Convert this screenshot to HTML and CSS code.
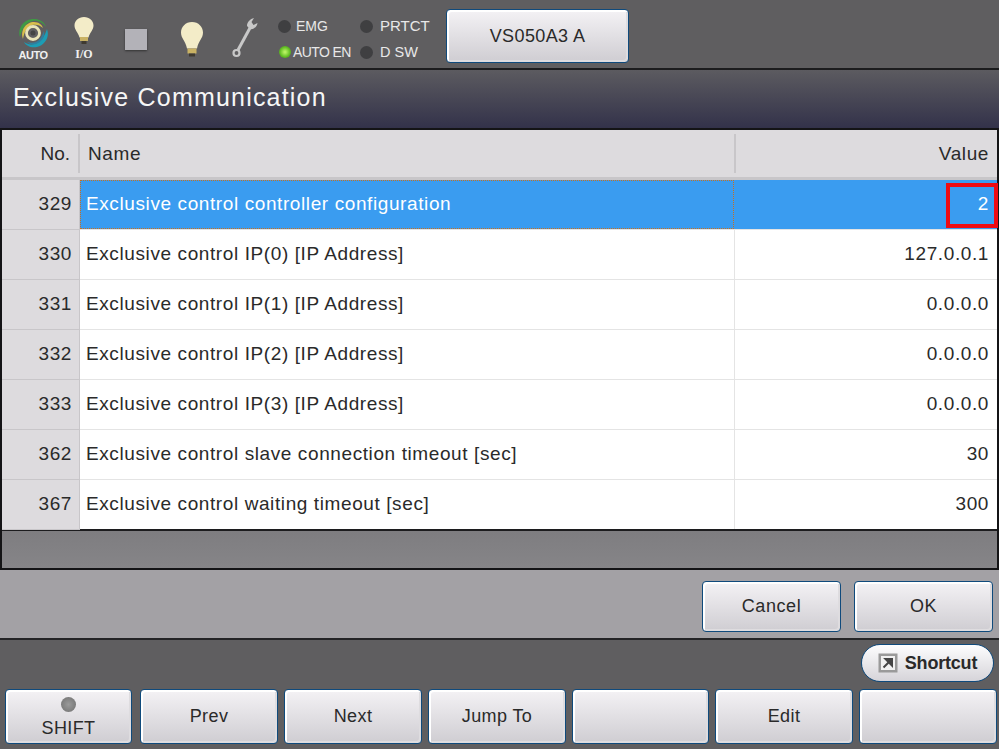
FILE: index.html
```html
<!DOCTYPE html>
<html lang="en">
<head>
<meta charset="utf-8">
<title>Exclusive Communication</title>
<link rel="stylesheet" href="styles.css">
</head>
<body>
<div class="screen">
  <header class="topbar">
    <div class="tool tool-auto">
      <svg viewBox="0 0 32 31" width="32" height="31">
        <path d="M3 20C0 10 8 1 18 2c6 .6 10 4 11 8-3-4-8-7-13-6C9 5 5 12 3 20z" fill="#3f9a44"/>
        <path d="M6 22C3 13 9 5 17 5c5 0 8 3 9 6-3-3-7-4-11-3-5 2-8 7-9 14z" fill="#d8bf4c"/>
        <path d="M30 12c3 8-2 16-10 18-6 1-11-1-13-5 4 3 9 3 13 1 5-2 8-8 10-14z" fill="#1c9db4"/>
        <path d="M27 14c1 6-2 11-8 13-4 1-7 0-9-2 3 1 6 1 9 0 4-2 6-6 8-11z" fill="#2f7fa0"/>
        <circle cx="16" cy="16" r="6.500" fill="none" stroke="#e9e4b8" stroke-width="2.800"/>
        <circle cx="16" cy="16" r="2.500" fill="#444"/>
      </svg>
      <span class="tool-label">AUTO</span>
    </div>
    <div class="tool tool-io">
      <svg viewBox="0 0 20 30" width="20" height="30">
        <path d="M10 1C4.500 1 .5 5 .5 9.500c0 4.500 3.500 6.500 5 12h9c1.500-5.500 5-7.500 5-12C19.500 5 15.500 1 10 1z" fill="#f3ecc8"/>
        <rect x="6" y="21" width="8" height="4" fill="#c9b264"/>
        <rect x="7.500" y="25" width="5" height="3" fill="#3f3a30"/>
      </svg>
      <span class="tool-label tool-label-serif">I/O</span>
    </div>
    <div class="square"></div>
    <svg class="bulb" viewBox="0 0 24 38" width="24" height="38">
      <path d="M12 1C5.500 1 1 6 1 11.500c0 6 4.500 8 6 16h10c1.500-8 6-10 6-16C23 6 18.500 1 12 1z" fill="#f3ecc8"/>
      <rect x="7.500" y="27.500" width="9" height="5" fill="#c9b264"/>
      <rect x="9" y="32.500" width="6" height="3" fill="#3f3a30"/>
    </svg>
    <svg class="wrench" viewBox="0 0 26 42" width="26" height="42">
      <path d="M6 33 18.500 10" stroke="#c8c8c8" stroke-width="3" fill="none"/>
      <path d="M15 9C15 5 18 2 22 1l-2.500 4 2 3 4-2c-.5 4-4.500 7-7.500 6z" fill="#c8c8c8"/>
      <circle cx="4.500" cy="36" r="3" fill="none" stroke="#c8c8c8" stroke-width="2.200"/>
    </svg>
    <div class="lamps">
      <div class="lamp"><i class="dot"></i>EMG</div>
      <div class="lamp lamp-wide"><i class="dot"></i>PRTCT</div>
      <div class="lamp lamp-tight"><i class="dot dot-on"></i>AUTO EN</div>
      <div class="lamp lamp-wide lamp-short"><i class="dot"></i>D SW</div>
    </div>
    <button class="btn btn-robot">VS050A3 A</button>
  </header>

  <h1 class="title">Exclusive Communication</h1>

  <section class="panel">
    <div class="row row-head">
      <div class="cell cell-no">No.</div>
      <div class="cell cell-name">Name</div>
      <div class="cell cell-value">Value</div>
    </div>
    <div class="row row-selected">
      <div class="cell cell-no">329</div>
      <div class="cell cell-name">Exclusive control controller configuration</div>
      <div class="cell cell-value">2<span class="cursor"></span></div>
    </div>
    <div class="row">
      <div class="cell cell-no">330</div>
      <div class="cell cell-name">Exclusive control IP(0) [IP Address]</div>
      <div class="cell cell-value">127.0.0.1</div>
    </div>
    <div class="row">
      <div class="cell cell-no">331</div>
      <div class="cell cell-name">Exclusive control IP(1) [IP Address]</div>
      <div class="cell cell-value">0.0.0.0</div>
    </div>
    <div class="row">
      <div class="cell cell-no">332</div>
      <div class="cell cell-name">Exclusive control IP(2) [IP Address]</div>
      <div class="cell cell-value">0.0.0.0</div>
    </div>
    <div class="row">
      <div class="cell cell-no">333</div>
      <div class="cell cell-name">Exclusive control IP(3) [IP Address]</div>
      <div class="cell cell-value">0.0.0.0</div>
    </div>
    <div class="row">
      <div class="cell cell-no">362</div>
      <div class="cell cell-name">Exclusive control slave connection timeout [sec]</div>
      <div class="cell cell-value">30</div>
    </div>
    <div class="row">
      <div class="cell cell-no">367</div>
      <div class="cell cell-name">Exclusive control waiting timeout [sec]</div>
      <div class="cell cell-value">300</div>
    </div>
    <div class="panel-rest"></div>
  </section>

  <div class="actions">
    <button class="btn btn-action">Cancel</button>
    <button class="btn btn-action">OK</button>
  </div>

  <footer class="footer">
    <div class="shortcut-row">
      <button class="shortcut">
        <svg viewBox="0 0 20 20" width="20" height="20">
          <rect x="0.500" y="0.500" width="19" height="19" fill="#9a9a9a"/>
          <rect x="3" y="3" width="14" height="14" fill="#f0f0f0"/>
          <path d="M5.500 14.500l5-5M7.500 6h6.500v6.500z" stroke="#444" stroke-width="2" fill="#444"/>
        </svg>
        Shortcut
      </button>
    </div>
    <div class="fkeys">
      <button class="btn fkey fkey-shift"><i class="shift-led"></i>SHIFT</button>
      <button class="btn fkey">Prev</button>
      <button class="btn fkey">Next</button>
      <button class="btn fkey">Jump To</button>
      <button class="btn fkey fkey-narrow"></button>
      <button class="btn fkey">Edit</button>
      <button class="btn fkey"></button>
    </div>
  </footer>
</div>
</body>
</html>
```
FILE: styles.css
```css
* { box-sizing: border-box; }
html, body { margin: 0; padding: 0; }
body { width: 999px; height: 749px; overflow: hidden; background: #5f5e60; font-family: "Liberation Sans", Arial, sans-serif; }
.screen { display: flex; flex-direction: column; width: 999px; height: 749px; }

.topbar { height: 70px; flex: none; display: flex; align-items: flex-start; background: #5f5e60; border-bottom: 2px solid #1c1c1e; }
.tool { display: flex; flex-direction: column; align-items: center; }
.tool-label { color: #f0f0f0; font-size: 11px; font-weight: 700; letter-spacing: -0.5px; line-height: 11px; white-space: nowrap; }
.tool-label-serif { font-family: "Liberation Serif", serif; font-size: 12px; letter-spacing: 0; }
.tool-auto { width: 32px; margin: 17px 0 0 17px; }
.tool-auto .tool-label { margin-top: 2px; }
.tool-io { width: 20px; margin: 16px 0 0 25px; }
.tool-io .tool-label { margin-top: 3px; }
.square { width: 22px; height: 21px; margin: 29px 0 0 31px; background: #b3b2b8; box-shadow: 0 1px 2px #333; }
.bulb { margin: 21px 0 0 33px; flex: none; }
.wrench { margin: 17px 0 0 28px; flex: none; }
.lamps { display: grid; grid-template-columns: 82px 70px; row-gap: 8px; margin: 17px 0 0 20px; }
.lamp { display: flex; align-items: center; gap: 5px; color: #e8e8e8; font-size: 14px; line-height: 18px; white-space: nowrap; }
.lamp-wide { gap: 7px; font-size: 15px; }
.lamp-short { font-size: 14.5px; }
.lamp-tight { gap: 2px; letter-spacing: -0.6px; }
.dot { width: 13px; height: 13px; border-radius: 50%; background: #3f3f41; flex: none; }
.dot-on { background: radial-gradient(circle, #b4f060 10%, #5fbb22 60%, #4a8a24 100%); margin-left: 1px; width: 12px; height: 12px; }

.btn { border: 1px solid #0f4a7c; border-radius: 4px; background: linear-gradient(#f4f2f5, #cfcdd2); box-shadow: inset 2px 2px 0 #fff, inset -2px -2px 0 #dedcdf; color: #2a2a2a; font-family: inherit; font-size: 18px; letter-spacing: 0.4px; padding: 0; }
.btn-robot { width: 183px; height: 54px; margin: 9px 0 0 16px; }

.title { height: 58px; flex: none; margin: 0; padding: 0 0 3px 13px; display: flex; align-items: center; background: linear-gradient(#5c5b60, #33324a); color: #f6f6f6; font-size: 25px; font-weight: 400; letter-spacing: 1.2px; }

.panel { height: 442px; flex: none; display: flex; flex-direction: column; border: 2px solid #141416; background: #807f82; }
.row { height: 50px; display: flex; flex: none; background: #fff; border-bottom: 1px solid #e4e4e4; color: #2a2a2a; font-size: 19px; letter-spacing: 0.6px; }
.cell { display: flex; align-items: center; position: relative; padding-bottom: 2px; }
.cell-no { width: 78px; justify-content: flex-end; padding-right: 7px; background: #dddbde; border-bottom: 1px solid #c8c6c9; border-right: 1px solid #c8c6c9; margin-bottom: -1px; }
.cell-name { width: 655px; padding-left: 6px; white-space: nowrap; border-right: 1px solid #e4e4e4; }
.cell-value { flex: 1; justify-content: flex-end; padding-right: 8px; }

.row-head { background: #dddbde; border-bottom: 3px solid #c8c6c9; }
.row-head .cell { padding-bottom: 0; }
.row-head .cell-no { border: 0; margin-bottom: 0; padding-right: 10px; letter-spacing: 0; }
.row-head .cell-name { padding-left: 8px; border-right: 0; width: 656px; }
.row-head .cell-no::after, .row-head .cell-name::after { content: ""; position: absolute; right: 0; top: 4px; bottom: 4px; width: 2px; background: #c8c6c9; }

.row-selected { background: #3a9cf0; color: #fff; }
.row-selected .cell-no { color: #2a2a2a; }
.row-selected .cell-name { border: 1px dotted #c8701e; padding-left: 5px; margin-right: 1px; width: 654px; }
.cursor { position: absolute; right: -1px; top: 3px; width: 52px; height: 45px; border: 4px solid #ee0b12; }
.panel-rest { flex: 1; margin-top: -1px; background: linear-gradient(#7e7d80, #868588); border-top: 2px solid #1c1c1e; }

.actions { height: 70px; flex: none; display: flex; justify-content: flex-end; gap: 13px; padding: 11px 6px 0 0; background: #a3a1a5; border-bottom: 2px solid #242426; }
.btn-action { width: 139px; height: 51px; letter-spacing: 0.6px; }

.footer { flex: 1; display: flex; flex-direction: column; background: #5f5e60; }
.shortcut-row { height: 49px; flex: none; display: flex; justify-content: flex-end; padding: 4px 5px 0 0; }
.shortcut { width: 133px; height: 38px; display: flex; align-items: center; justify-content: center; gap: 7px; padding: 0; border: 1px solid #0f4a7c; border-radius: 19px; background: linear-gradient(#fdfdfe, #d6d4d9); color: #2a2a2a; font-family: inherit; font-size: 18px; font-weight: 700; letter-spacing: -0.2px; }
.fkeys { display: flex; gap: 6px; padding-left: 5px; }
.fkey { width: 138px; height: 55px; flex: none; }
.fkey-narrow { width: 137px; }
.fkey-shift { width: 127px; margin-right: 2px; display: flex; flex-direction: column; align-items: center; padding-top: 7px; line-height: 20px; }
.shift-led { width: 15px; height: 15px; margin-bottom: 6px; border-radius: 50%; background: radial-gradient(circle, #9a9a9a, #6f6f6f); }
```
